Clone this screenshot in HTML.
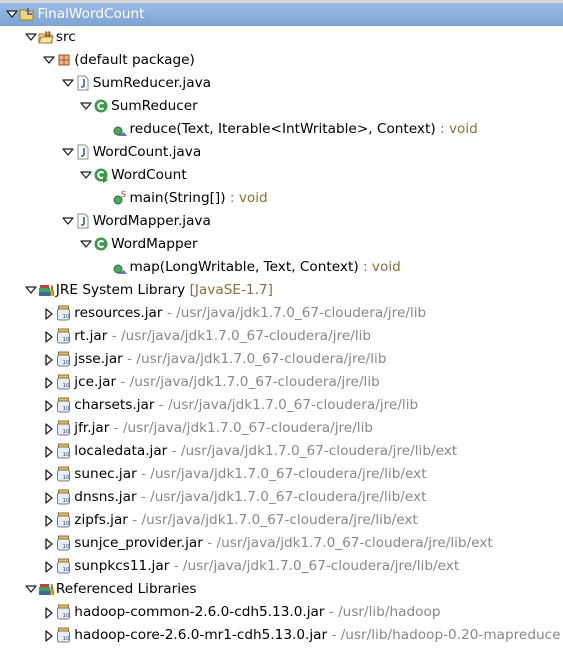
<!DOCTYPE html><html><head><style>
body{margin:0;width:563px;height:648px;background:#fff;font-family:"DejaVu Sans","Liberation Sans",sans-serif;font-size:13.65px;color:#000;overflow:hidden;position:relative}
.top{position:absolute;left:0;top:0;width:563px;height:3px;background:#d8d8d8}
.sel{position:absolute;left:0;top:3px;width:563px;height:23px;background:linear-gradient(#9abbe5,#7da4d3)}
.r{position:absolute;height:23px;line-height:23px;white-space:nowrap}
.g{color:#888}.b{color:#8b6f3a}
.tg{position:absolute;width:12px;height:12px}
.ic{position:absolute;width:16px;height:16px}
</style></head><body>
<div class="top"></div><div class="sel"></div>
<div id="c"></div>
<script>
const I={
proj:'<svg class="ic" viewBox="0 0 16 16"><path d="M1 4h5l1 1h7v9H1z" fill="#f3d27a" stroke="#a07a20"/><path d="M9 2v6h4" fill="none" stroke="#2a5aa8" stroke-width="1.5"/></svg>',
src:'<svg class="ic" viewBox="0 0 16 16"><path d="M1 5h5l1 1h7v8H1z" fill="#f5d38a" stroke="#a07a20"/><path d="M3 8h12l-2 6H1z" fill="#f8e2a8" stroke="#a07a20"/><path d="M8 2v6M11 2v6M7 4h6M7 6.5h6" stroke="#8a4a10"/></svg>',
pkg:'<svg class="ic" viewBox="0 0 16 16"><rect x="3" y="3" width="10" height="10" fill="#e8b88a" stroke="#a05020"/><path d="M8 3v10M3 8h10" stroke="#a05020"/></svg>',
java:'<svg class="ic" viewBox="0 0 16 16"><path d="M3 1h7l3 3v11H3z" fill="#fff" stroke="#888"/><path d="M9 4v6q0 2-2 2H6" fill="none" stroke="#3060b0" stroke-width="1.6"/></svg>',
cls:'<svg class="ic" viewBox="0 0 16 16"><circle cx="8" cy="8" r="6.5" fill="#3a9a4a"/><path d="M10.5 6a3 3 0 1 0 0 4" fill="none" stroke="#fff" stroke-width="2"/></svg>',
clsm:'<svg class="ic" viewBox="0 0 16 16"><circle cx="8" cy="8" r="6.5" fill="#3a9a4a"/><path d="M10.5 6a3 3 0 1 0 0 4" fill="none" stroke="#fff" stroke-width="2"/><path d="M10 10l5 3-5 3z" fill="#2a9a2a"/></svg>',
meth:'<svg class="ic" viewBox="0 0 16 16"><circle cx="6" cy="10" r="4" fill="#4aa860" stroke="#2a7040"/><path d="M6 15h9l-3-4z" fill="#7070c0"/></svg>',
main:'<svg class="ic" viewBox="0 0 16 16"><circle cx="6" cy="10" r="4" fill="#4aa860" stroke="#2a7040"/><text x="9" y="7" font-size="8" fill="#c02020" font-family="DejaVu Sans">S</text></svg>',
lib:'<svg class="ic" viewBox="0 0 16 16"><rect x="1" y="10" width="11" height="4" fill="#3a6aa0"/><rect x="1" y="6" width="11" height="4" fill="#40a060"/><rect x="2" y="3" width="9" height="3" fill="#c04040"/><path d="M12 14l2-11 2 11" fill="#e0b030" stroke="#a07010"/></svg>',
jar:'<svg class="ic" viewBox="0 0 16 16"><rect x="1.5" y="4" width="12" height="11" rx="2" fill="#e8eef6" stroke="#6a7a90"/><rect x="2.5" y="1" width="10" height="3" fill="#e0c070" stroke="#907030"/><text x="6.5" y="13" font-size="5.5" fill="#2a4a8a" font-family="DejaVu Sans">10</text></svg>'
};
const TD='<svg class="tg" viewBox="0 0 12 12"><path d="M1 3h10L6 9z" fill="#fff" stroke="#222" stroke-width="1.3" stroke-linejoin="round"/></svg>';
const TR='<svg class="tg" viewBox="0 0 12 12"><path d="M3 1v10l6-5z" fill="#fff" stroke="#222" stroke-width="1.3" stroke-linejoin="round"/></svg>';
const rows=[
[0,'d','proj','FinalWordCount','',1],
[1,'d','src','src'],
[2,'d','pkg','(default package)'],
[3,'d','java','SumReducer.java'],
[4,'d','cls','SumReducer'],
[5,'','meth','reduce(Text, Iterable&lt;IntWritable&gt;, Context)','<span class="b"> : void</span>'],
[3,'d','java','WordCount.java'],
[4,'d','clsm','WordCount'],
[5,'','main','main(String[])','<span class="b"> : void</span>'],
[3,'d','java','WordMapper.java'],
[4,'d','cls','WordMapper'],
[5,'','meth','map(LongWritable, Text, Context)','<span class="b"> : void</span>'],
[1,'d','lib','JRE System Library','<span class="b"> [JavaSE-1.7]</span>'],
];
const P='/usr/java/jdk1.7.0_67-cloudera/jre/lib';
[['resources.jar',''],['rt.jar',''],['jsse.jar',''],['jce.jar',''],['charsets.jar',''],['jfr.jar',''],['localedata.jar','/ext'],['sunec.jar','/ext'],['dnsns.jar','/ext'],['zipfs.jar','/ext'],['sunjce_provider.jar','/ext'],['sunpkcs11.jar','/ext']].forEach(a=>rows.push([2,'r','jar',a[0],'<span class="g"> - '+P+a[1]+'</span>']));
rows.push([1,'d','lib','Referenced Libraries']);
rows.push([2,'r','jar','hadoop-common-2.6.0-cdh5.13.0.jar','<span class="g"> - /usr/lib/hadoop</span>']);
rows.push([2,'r','jar','hadoop-core-2.6.0-mr1-cdh5.13.0.jar','<span class="g"> - /usr/lib/hadoop-0.20-mapreduce</span>']);
let h='';
rows.forEach((r,i)=>{const y=3+i*23,L=r[0];
const ix=19+18.5*L,txx=37.5+18.4*L;
const tx=6+18.5*L;
if(r[1]=='d')h+=TD.replace('class="tg"','class="tg" style="left:'+tx+'px;top:'+(y+5)+'px"');
if(r[1]=='r')h+=TR.replace('class="tg"','class="tg" style="left:'+tx+'px;top:'+(y+6)+'px"');
h+=I[r[2]].replace('class="ic"','class="ic" style="left:'+ix+'px;top:'+(y+3)+'px"');
h+='<div class="r" style="left:'+txx+'px;top:'+y+'px;'+(r[5]?'color:#fff':'')+'">'+r[3]+(r[4]||'')+'</div>';});
document.getElementById('c').innerHTML=h;
</script>
</body></html>
